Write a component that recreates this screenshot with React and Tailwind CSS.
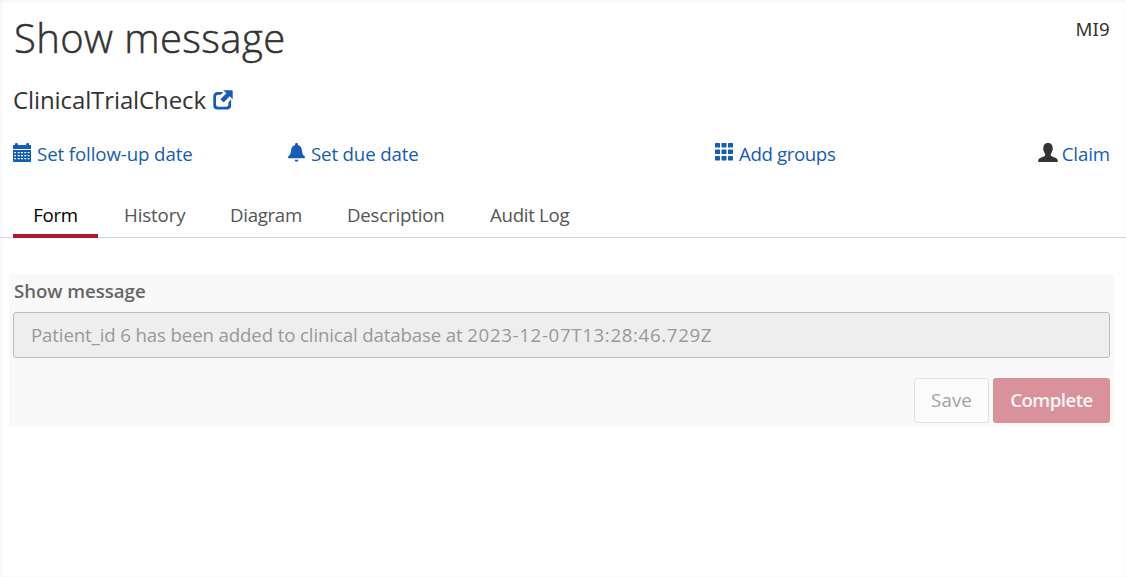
const CalendarIcon = () => (
  <svg width="18" height="19" viewBox="0 0 18 19" className="shrink-0 fill-[#155cb5]">
    <path fillRule="evenodd" d="M2 1.2C2 .5 2.6 0 3.4 0s1.4.5 1.4 1.2V2h8.4v-.8c0-.7.6-1.2 1.4-1.2S16 .5 16 1.2V2h2v4H0V2h2zM0 7h18v11.2c0 .5-.3.8-.8.8H.8c-.5 0-.8-.3-.8-.8zM1.300 9v1.300h1.700v-1.300zm3.400 0v1.300h2v-1.300zm3.300 0v1.300h2v-1.300zm3.300 0v1.300h2v-1.300zm3.400 0v1.300h1.700v-1.300zM1.300 12v1.200h1.700v-1.200zm3.400 0v1.200h2v-1.200zm3.300 0v1.200h2v-1.200zm3.300 0v1.200h2v-1.200zm3.400 0v1.200h1.700v-1.200zM1.300 15v1.200h1.700v-1.200zm3.400 0v1.200h2v-1.200zm3.300 0v1.200h2v-1.200zm3.300 0v1.200h2v-1.200zm3.400 0v1.200h1.700v-1.200z" />
  </svg>
);
const BellIcon = () => (
  <svg width="17" height="19" viewBox="0 0 17 19" className="shrink-0 fill-[#155cb5]">
    <path d="M8.500 0c.9 0 1.400.5 1.400 1.300v.6c2.300.7 3.700 2.500 4 5.200.3 3.300.9 5 2.700 6.200.6.500.4 1.900-.4 1.900H.8c-.8 0-1-1.400-.4-1.900 1.800-1.200 2.400-2.900 2.700-6.200.3-2.700 1.700-4.500 4-5.200v-.6C7.100.5 7.600 0 8.500 0zM6.500 16.700h4c-.3 1.300-1 2-2 2s-1.700-.7-2-2z" />
  </svg>
);
const GridIcon = () => (
  <svg width="18" height="18" viewBox="0 0 18 18" className="shrink-0 fill-[#155cb5]">
    {[0, 6.5, 13].map((y) => [0, 6.5, 13].map((x) => <rect key={`${x}-${y}`} x={x} y={y} width="5" height="4.500" rx=".4" />))}
  </svg>
);
const UserIcon = () => (
  <svg width="20" height="19" viewBox="0 0 20 19" className="shrink-0 fill-[#333]">
    <path d="M10 0c3 0 4.600 2 4.600 4.800 0 .7.300.8.200 1.700-.1.900-.5 1-.7 1.800-.3 1.500-1.200 2.300-1.300 3.200-.1 1.100.3 1.600 1.400 2.100l3.600 1.500c1.200.5 1.800 1.300 1.900 2.400l.1 1.500H.2l.1-1.500c.1-1.100.7-1.900 1.900-2.400l3.600-1.500c1.100-.5 1.500-1 1.400-2.100-.1-.9-1-1.700-1.300-3.200-.2-.8-.6-.9-.7-1.800-.1-.9.2-1 .2-1.700C5.400 2 7 0 10 0z" />
  </svg>
);
const ShareIcon = () => (
  <svg width="20" height="20" viewBox="0 0 20 20" className="shrink-0 fill-[#155cb5]">
    <path d="M4.800 2h5.500L7.600 4.700H5.200c-1.400 0-2.200.8-2.200 2.200v7.600c0 1.400.8 2.200 2.200 2.200h8c1.400 0 2.200-.8 2.200-2.200v-2.300l2.700-2.700v6c0 2.400-1.600 4-4 4H4.300c-2.400 0-4-1.600-4-4V6.500C.3 3.800 2 2 4.800 2z" />
    <path d="M10.200.3H19c.4 0 .7.300.7.700v8.300l-3-3-6 6.200-3.300-3.200L13.500 3.200z" />
  </svg>
);

const tabs = [
  ["History", "tracking-[-0.1px] w-[106px]"],
  ["Diagram", "tracking-[-0.3px] w-[117px]"],
  ["Description", "tracking-[-0.2px] w-[143px]"],
  ["Audit Log", "tracking-[-0.3px] w-[125px]"],
];

export default function App() {
  return (
    <div className="h-[577px] w-full overflow-hidden bg-white font-['Open_Sans',sans-serif] text-[18.67px] leading-[26px] text-[#333] shadow-[inset_1px_1px_4px_rgba(0,0,0,0.06)]">
      <header className="flex h-[85px] items-start justify-between pr-4 pl-[14px]">
        <h1 className="pt-[10px] text-[40px] leading-[56px] font-light tracking-[0.4px] [-webkit-text-stroke:0.5px_#333]">Show message</h1>
        <span className="pt-4 font-['Noto_Sans',sans-serif] tracking-[0.2px]">MI9</span>
      </header>
      <div className="flex h-[58px] items-start pl-[13px]">
        <h2 className="-mt-px w-[200px] text-2xl leading-[32px] tracking-[-0.1px] whitespace-nowrap">ClinicalTrialCheck</h2>
        <div className="pt-[5px]"><ShareIcon /></div>
      </div>
      <div className="flex h-[53px] items-start pr-4 pl-[13px] text-[#155cb5]">
        <div className="flex w-[275px] gap-[6px]"><CalendarIcon /><span className="-mt-[2px] tracking-[-0.1px]">Set follow-up date</span></div>
        <div className="flex w-[427px] gap-[6px]"><BellIcon /><span className="-mt-[2px] tracking-[-0.15px]">Set due date</span></div>
        <div className="flex gap-[6px]"><GridIcon /><span className="-mt-[2px] tracking-[-0.38px]">Add groups</span></div>
        <div className="ml-auto flex gap-[4px]"><UserIcon /><span className="-mt-[2px] tracking-[-0.1px]">Claim</span></div>
      </div>
      <nav className="flex h-[42px] border-b border-[#d8d8d8] pl-[13px]">
        <div className="h-[42px] w-[85px] border-b-4 border-[#b5152b] pt-1.5 text-center tracking-[-0.3px] text-black">Form</div>
        <div className="flex pt-1.5 pl-[26px] text-[#555]">
          {tabs.map(([label, cls]) => <span key={label} className={cls}>{label}</span>)}
        </div>
      </nav>
      <main className="mt-9 mr-3 ml-[9px] h-[153px] bg-[#f9f9f9] px-1 pt-[4px]">
        <div className="h-[34px] pl-px font-semibold tracking-[-0.05px] text-[#666]">Show message</div>
        <div className="h-[46px] rounded-[3px] border border-[#bbb] bg-[#eee] pt-[9px] pl-[17px] tracking-[-0.13px] text-[#999]">
          Patient_id 6 has been added to clinical database at <span className="tracking-[0.66px]">2023-12-07T13:28:46.729Z</span>
        </div>
        <div className="mt-5 flex justify-end gap-1">
          <button className="h-[45px] w-[75px] rounded-[3px] border border-[#e1e1e1] bg-[#fbfbfb] pb-0.5 tracking-[0.1px] text-[#a3a3a3]">Save</button>
          <button className="h-[45px] w-[117px] rounded-[3px] bg-[#d9929c] pb-0.5 font-semibold tracking-[-0.5px] text-[#fbf5f5]">Complete</button>
        </div>
      </main>
    </div>
  );
}
